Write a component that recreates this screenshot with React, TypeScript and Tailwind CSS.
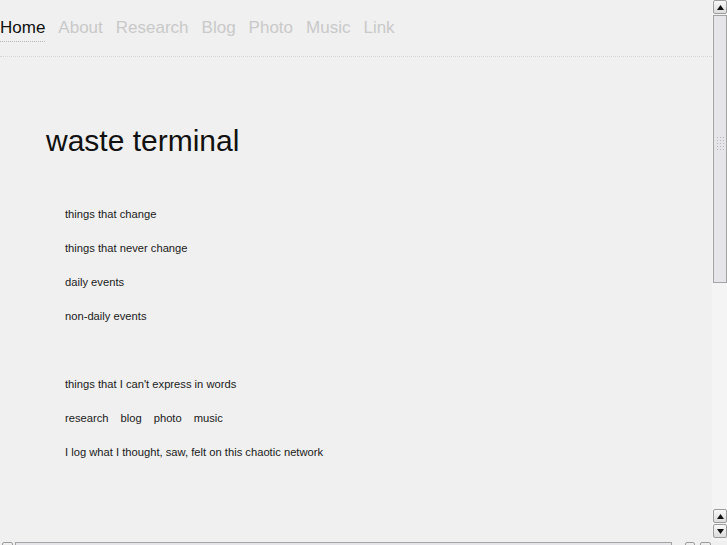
import * as React from 'react';

const links = ['About', 'Research', 'Blog', 'Photo', 'Music', 'Link'];

const items: (string | React.ReactNode)[] = [
  'things that change',
  'things that never change',
  'daily events',
  'non-daily events',
  '',
  "things that I can't express in words",
  <span key="nav" className="flex gap-[12px]">
    <span>research</span>
    <span>blog</span>
    <span>photo</span>
    <span>music</span>
  </span>,
  'I log what I thought, saw, felt on this chaotic network',
];

function Arrow({ up }: { up: boolean }): React.ReactElement {
  return (
    <svg width="7" height="5" viewBox="0 0 7 5">
      <path d={up ? 'M0 5 L3.5 0 L7 5 Z' : 'M0 0 L3.5 5 L7 0 Z'} fill="#111" />
    </svg>
  );
}

function ScrollButton({ up }: { up: boolean }): React.ReactElement {
  return (
    <div className="flex h-[14px] w-[14px] items-center justify-center rounded-[2px] border border-[#9c9c9c] bg-gradient-to-b from-[#f8f8f8] to-[#dcdcdc]">
      <Arrow up={up} />
    </div>
  );
}

function VScrollbar(): React.ReactElement {
  return (
    <div className="flex w-[15px] flex-col items-center bg-[#f4f4f4] pl-px">
      <ScrollButton up />
      <div className="mt-px flex h-[268px] w-[14px] items-center justify-center border border-[#a3a3a3] bg-[#e6e6ea]">
        <div className="grid grid-cols-3 gap-[2px] pb-[12px]">
          {Array.from({ length: 15 }).map((_, i) => (
            <span key={i} className="h-px w-px bg-[#b6b6b6]" />
          ))}
        </div>
      </div>
      <div className="flex-1" />
      <ScrollButton up />
      <div className="mt-px">
        <ScrollButton up={false} />
      </div>
      <div className="h-[3px]" />
    </div>
  );
}

export default function App(): React.ReactElement {
  return (
    <div
      className="flex h-[545px] w-[727px] flex-col overflow-hidden bg-[#f0f0f0] text-[#111]"
      style={{ fontFamily: '"Liberation Sans", Arial, sans-serif' }}
    >
      <div className="flex min-h-0 flex-1">
        <div className="flex-1">
          <nav className="flex gap-[13px] border-b border-dotted border-[#d6d6d6] pb-[14px] pt-[18px] text-[17px] leading-[20px]">
            <span className="border-b border-dotted border-[#b8b8b8] pb-[3px] text-[#111]">Home</span>
            {links.map((l) => (
              <span key={l} className="text-[#c9c9c9]">
                {l}
              </span>
            ))}
          </nav>
          <h1 className="ml-[46px] mt-[66px] text-[30px] leading-[36px] font-normal text-[#111]">
            waste terminal
          </h1>
          <ul className="ml-[65px] mt-[38px] text-[11.2px] leading-[34px] text-[#1a1a1a]">
            {items.map((it, i) => (
              <li key={i} className="h-[34px]">
                {it}
              </li>
            ))}
          </ul>
        </div>
        <VScrollbar />
      </div>
      <div className="flex h-[4px] items-start gap-[2px] pl-[2px] pt-px">
        <div className="h-[12px] w-[11px] rounded-[2px] border border-[#9c9c9c] bg-[#eee]" />
        <div className="h-[12px] w-[657px] border border-[#a3a3a3] bg-[#e6e6ea]" />
        <div className="ml-[11px] h-[12px] w-[10px] rounded-[2px] border border-[#9c9c9c] bg-[#eee]" />
        <div className="ml-[3px] h-[12px] w-[11px] rounded-[2px] border border-[#9c9c9c] bg-[#eee]" />
      </div>
    </div>
  );
}
